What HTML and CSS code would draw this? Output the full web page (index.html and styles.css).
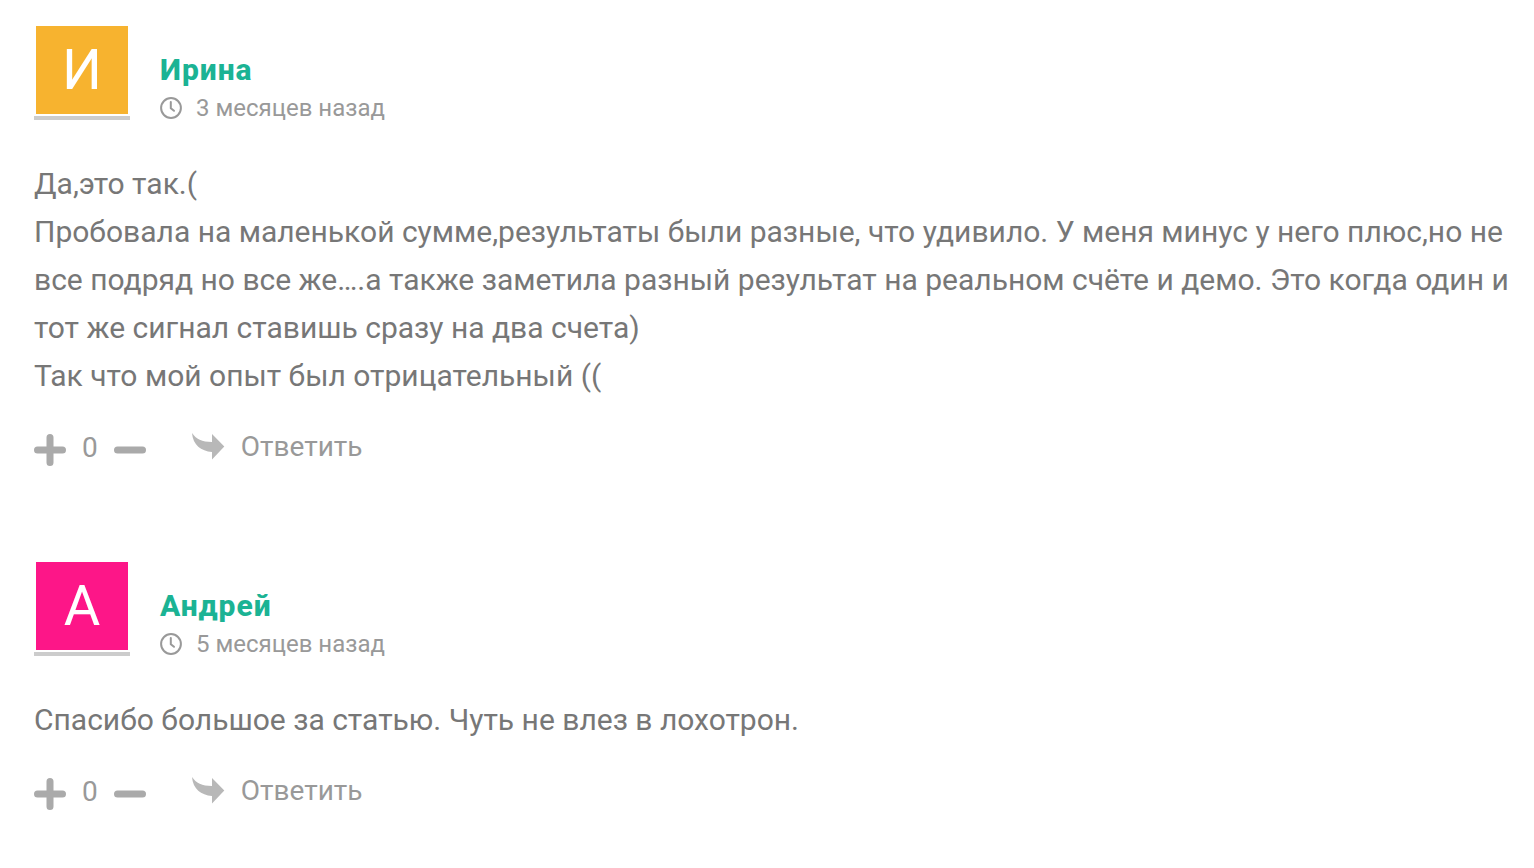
FILE: index.html
```html
<!DOCTYPE html>
<html lang="ru">
<head>
<meta charset="utf-8">
<title>Комментарии</title>
<link rel="stylesheet" href="styles.css">
</head>
<body>
<svg class="sprite" aria-hidden="true">
  <symbol id="clock" viewBox="0 0 22 22"><circle cx="11" cy="11" r="9.9"/><path d="M10.8 5V11.2L14 13.8"/></symbol>
  <symbol id="plus" viewBox="0 0 32 32"><path d="M16 3.5V28.5M3.5 16H28.5"/></symbol>
  <symbol id="minus" viewBox="0 0 32 32"><path d="M3.5 16H28.5"/></symbol>
  <symbol id="reply" viewBox="0 0 34 28"><path d="M1 0C5 6 11 9 21 9V1L33.3 13.5L21 26.5V19C10 18 2 12 1 0Z"/></symbol>
</svg>
<main class="comments">
  <article class="comment">
    <header class="head">
      <div class="avatar avatar-amber"><span class="letter">И</span></div>
      <div class="meta">
        <h2 class="author">Ирина</h2>
        <p class="date"><svg class="clock"><use href="#clock"/></svg><time>3 месяцев назад</time></p>
      </div>
    </header>
    <p class="text">Да,это так.(<br>Пробовала на маленькой сумме,результаты были разные, что удивило. У меня минус у него плюс,но не все подряд но все же….а также заметила разный результат на реальном счёте и демо. Это когда один и тот же сигнал ставишь сразу на два счета)<br>Так что мой опыт был отрицательный ((</p>
    <footer class="actions">
      <button class="vote" type="button" aria-label="Нравится"><svg class="sign"><use href="#plus"/></svg></button>
      <span class="count">0</span>
      <button class="vote" type="button" aria-label="Не нравится"><svg class="sign"><use href="#minus"/></svg></button>
      <button class="reply" type="button"><svg class="arrow"><use href="#reply"/></svg>Ответить</button>
    </footer>
  </article>
  <article class="comment">
    <header class="head">
      <div class="avatar avatar-pink"><span class="letter">А</span></div>
      <div class="meta">
        <h2 class="author">Андрей</h2>
        <p class="date"><svg class="clock"><use href="#clock"/></svg><time>5 месяцев назад</time></p>
      </div>
    </header>
    <p class="text">Спасибо большое за статью. Чуть не влез в лохотрон.</p>
    <footer class="actions">
      <button class="vote" type="button" aria-label="Нравится"><svg class="sign"><use href="#plus"/></svg></button>
      <span class="count">0</span>
      <button class="vote" type="button" aria-label="Не нравится"><svg class="sign"><use href="#minus"/></svg></button>
      <button class="reply" type="button"><svg class="arrow"><use href="#reply"/></svg>Ответить</button>
    </footer>
  </article>
</main>
</body>
</html>
```
FILE: styles.css
```css
* { box-sizing: border-box; margin: 0; padding: 0; }
body { background: #fff; color: #777; font-family: Roboto, "Liberation Sans", sans-serif; }
.sprite { position: absolute; width: 0; height: 0; }
.comments { display: flex; flex-direction: column; gap: 88px; padding: 24px 24px 24px 34px; }
.head { display: flex; gap: 30px; }
.avatar { width: 96px; height: 96px; padding: 2px; display: grid; background-clip: content-box; border-bottom: 4px solid #ccc; }
.avatar-amber { background-color: #f7b32f; }
.avatar-pink { background-color: #fd1688; }
.letter { place-self: center; color: #fff; font-size: 56px; line-height: 88px; }
.meta { padding-top: 28px; }
.author { color: #1bb394; font-size: 30px; line-height: 36px; font-weight: 800; letter-spacing: 1px; }
.date { display: flex; align-items: center; gap: 14px; color: #999; font-size: 24px; line-height: 40px; }
.clock { width: 22px; height: 22px; fill: none; stroke: #999; stroke-width: 2; stroke-linecap: round; stroke-linejoin: round; }
.clock path { stroke-width: 2.4; }
.text { margin-top: 32px; font-size: 30px; line-height: 48px; }
.actions { display: flex; align-items: center; margin-top: 24px; color: #999; font-size: 28px; line-height: 48px; }
.vote, .reply { display: flex; align-items: center; border: 0; background: none; color: inherit; font: inherit; cursor: pointer; }
.vote { padding-top: 4px; }
.sign { width: 32px; height: 32px; fill: none; stroke: #aaa; stroke-width: 7; stroke-linecap: round; }
.count { padding: 0 16px; }
.reply { gap: 16px; margin-left: 45px; padding-bottom: 2px; line-height: 46px; }
.arrow { width: 34px; height: 28px; fill: #b8b8b8; }
```
